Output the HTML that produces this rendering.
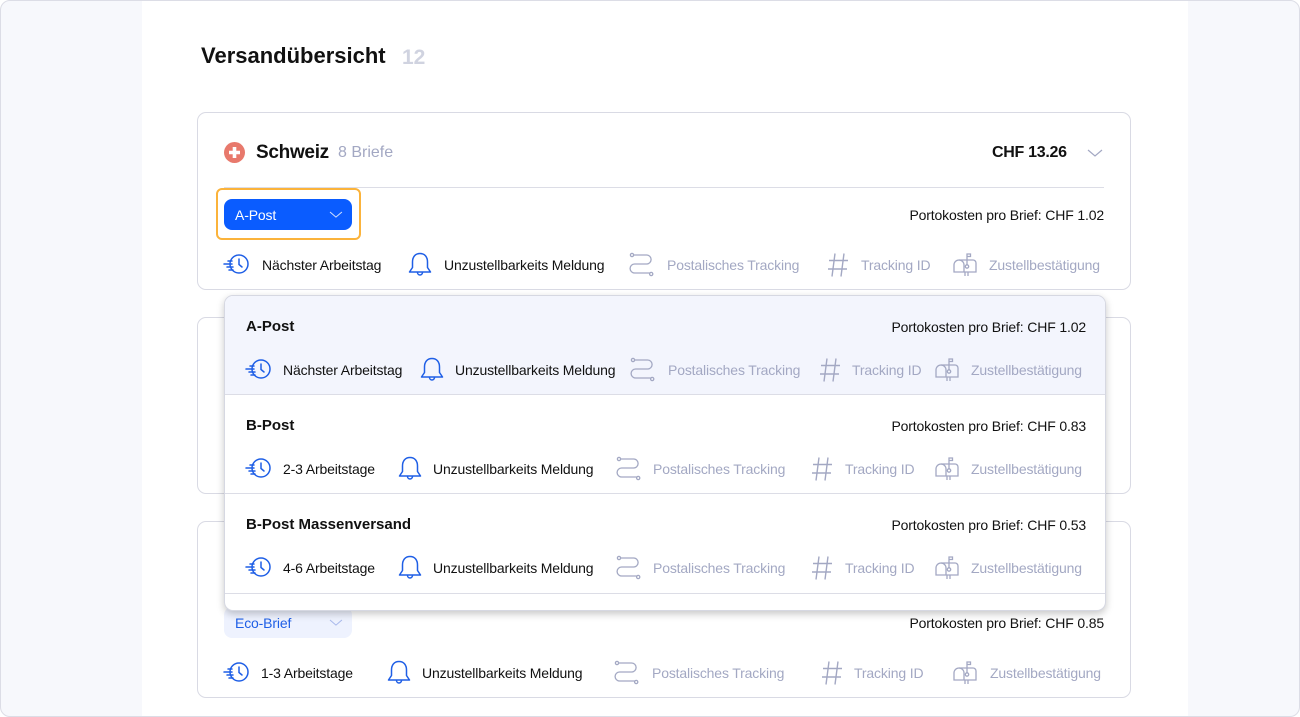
<!DOCTYPE html>
<html><head><meta charset="utf-8">
<style>
*{box-sizing:border-box;margin:0;padding:0}
body{width:1300px;height:717px;overflow:hidden;background:#fff;font-family:"Liberation Sans",sans-serif;position:relative;color:#111}
.page{position:absolute;left:0;top:0;width:1300px;height:717px;border:1px solid #dcdde6;border-radius:10px;background:#f7f8fc;overflow:hidden}
.col{position:absolute;left:141px;top:0;width:1046px;height:717px;background:#fff}
.a{position:absolute;white-space:nowrap}
.card{position:absolute;left:197px;width:934px;border:1px solid #d9dae4;border-radius:9px;background:#fff}
.t{font-size:14px;line-height:16px;letter-spacing:-0.15px}
.g{color:#a3a8c3}
.ic{position:absolute;width:26px;height:26px}
.b{stroke:#1f5fe6}.gr{stroke:#a3a8c3}
svg{overflow:visible}
.dd{position:absolute;left:224px;top:295px;width:882px;height:316px;background:#fff;border:1px solid #d6d8e2;border-radius:9px;box-shadow:0 3px 8px rgba(0,0,0,.22);overflow:hidden}
.row{position:absolute;left:0;width:882px;height:100px;border-bottom:1px solid #dcdde6}
.h{font-weight:bold;font-size:15px}
</style></head><body>
<svg width="0" height="0" style="position:absolute">
<defs>
<g id="clk" fill="none" stroke-width="1.5" stroke-linecap="round"><circle cx="15" cy="12" r="9"/><path d="M15 7v5.5l3 2.5"/><path d="M0 12h8M3 15h6M5 18h4M4 9h4"/></g>
<g id="bel" fill="none" stroke-width="1.5" stroke-linejoin="round"><path d="M13 1.5c-4.8 0-7.5 3.5-7.5 8.5v5.5l-3 4.5h21l-3-4.5v-5.5c0-5-2.7-8.5-7.5-8.5z"/><path d="M10.5 20.5a2.5 2.5 0 0 0 5 0"/></g>
<g id="trk" fill="none" stroke-width="1.3"><circle cx="3" cy="2" r="1.6"/><path d="M4.6 2h13a4.5 4.5 0 0 1 0 9h-12a4.5 4.5 0 0 0 0 9h15"/><circle cx="22.2" cy="21" r="1.6"/></g>
<g id="hsh" fill="none" stroke-width="1.4"><path d="M10 1.5L7 24.5M19 1.5L16 24.5M4 8.5h19M3 17h19"/></g>
<g id="mbx" fill="none" stroke-width="1.3"><path d="M7 8a5 5 0 0 0-5 5v7h22v-9a3 3 0 0 0-3-3z"/><path d="M7 8a5 5 0 0 1 5 5v7"/><path d="M15 13V2h3.5v2.5H15"/><circle cx="15" cy="14.5" r="1.7"/><path d="M13 20v4M16 20v4"/></g>
<g id="chv" fill="none" stroke-width="1.2"><path d="M0 0l7 6 7-6"/></g>
</defs></svg>
<div class="page"><div class="col"></div></div>

<div class="a" style="left:201px;top:43px;font-size:22px;font-weight:bold">Versandübersicht</div>
<div class="a" style="left:402px;top:46px;font-size:21px;font-weight:bold;color:#d0d3e0">12</div>

<!-- card 1 -->
<div class="card" style="top:112px;height:178px"></div>
<svg class="a" style="left:224px;top:142px" width="21" height="21"><circle cx="10.5" cy="10.5" r="10.5" fill="#e8796c"/><path d="M10.5 5v11M5 10.5h11" stroke="#fff" stroke-width="3.6"/></svg>
<div class="a" style="left:256px;top:142px;font-size:19px;font-weight:bold;letter-spacing:-0.3px">Schweiz</div>
<div class="a g" style="left:338px;top:144px;font-size:16px">8 Briefe</div>
<div class="a" style="left:992px;top:144px;font-size:16px;font-weight:bold;letter-spacing:-0.3px">CHF 13.26</div>
<svg class="a" style="left:1088px;top:150px" width="16" height="8"><use href="#chv" class="gr"/></svg>
<div class="a" style="left:224px;top:187px;width:880px;height:1px;background:#dcdde6"></div>
<div class="a" style="left:216px;top:188px;width:145px;height:52px;border:2px solid #fbb33b;border-radius:6px"></div>
<div class="a" style="left:224px;top:199px;width:128px;height:31px;background:#0a5cff;border-radius:8px"></div>
<div class="a t" style="left:235px;top:207px;color:#fff">A-Post</div>
<svg class="a" style="left:330px;top:212px" width="12" height="6"><g transform="scale(.85)"><use href="#chv" stroke="#cfe0ff"/></g></svg>
<div class="a t" style="right:196px;top:207px">Portokosten pro Brief: CHF 1.02</div>

<svg class="ic" style="left:224px;top:252px"><use href="#clk" class="b"/></svg><div class="a t" style="left:262px;top:257px">Nächster Arbeitstag</div>
<svg class="ic" style="left:407px;top:252px"><use href="#bel" class="b"/></svg><div class="a t" style="left:444px;top:257px">Unzustellbarkeits Meldung</div>
<svg class="ic" style="left:629px;top:253px"><use href="#trk" class="gr"/></svg><div class="a t g" style="left:667px;top:257px">Postalisches Tracking</div>
<svg class="ic" style="left:825px;top:252px"><use href="#hsh" class="gr"/></svg><div class="a t g" style="left:861px;top:257px">Tracking ID</div>
<svg class="ic" style="left:952px;top:252px"><use href="#mbx" class="gr"/></svg><div class="a t g" style="left:989px;top:257px">Zustellbestätigung</div>

<!-- card 2 & 3 -->
<div class="card" style="top:317px;height:177px"></div>
<div class="card" style="top:521px;height:177px"></div>
<div class="a" style="left:224px;top:607px;width:128px;height:31px;background:#eef2fe;border-radius:8px"></div>
<div class="a t" style="left:235px;top:615px;color:#1f5fe6">Eco-Brief</div>
<svg class="a" style="left:330px;top:620px" width="12" height="6"><g transform="scale(.85)"><use href="#chv" stroke="#a9b9ec"/></g></svg>
<div class="a t" style="right:196px;top:615px">Portokosten pro Brief: CHF 0.85</div>
<svg class="ic" style="left:224px;top:660px"><use href="#clk" class="b"/></svg><div class="a t" style="left:261px;top:665px">1-3 Arbeitstage</div>
<svg class="ic" style="left:386px;top:660px"><use href="#bel" class="b"/></svg><div class="a t" style="left:422px;top:665px">Unzustellbarkeits Meldung</div>
<svg class="ic" style="left:614px;top:661px"><use href="#trk" class="gr"/></svg><div class="a t g" style="left:652px;top:665px">Postalisches Tracking</div>
<svg class="ic" style="left:819px;top:660px"><use href="#hsh" class="gr"/></svg><div class="a t g" style="left:854px;top:665px">Tracking ID</div>
<svg class="ic" style="left:952px;top:660px"><use href="#mbx" class="gr"/></svg><div class="a t g" style="left:990px;top:665px">Zustellbestätigung</div>

<!-- dropdown -->
<div class="dd">
 <div class="row" style="top:0;height:99px;background:#f3f5fd">
  <div class="a h" style="left:21px;top:22px">A-Post</div>
  <div class="a t" style="right:21px;top:23px">Portokosten pro Brief: CHF 1.02</div>
  <svg class="ic" style="left:21px;top:61px"><use href="#clk" class="b"/></svg><div class="a t" style="left:58px;top:66px">Nächster Arbeitstag</div>
  <svg class="ic" style="left:194px;top:61px"><use href="#bel" class="b"/></svg><div class="a t" style="left:230px;top:66px">Unzustellbarkeits Meldung</div>
  <svg class="ic" style="left:405px;top:62px"><use href="#trk" class="gr"/></svg><div class="a t g" style="left:443px;top:66px">Postalisches Tracking</div>
  <svg class="ic" style="left:592px;top:61px"><use href="#hsh" class="gr"/></svg><div class="a t g" style="left:627px;top:66px">Tracking ID</div>
  <svg class="ic" style="left:709px;top:61px"><use href="#mbx" class="gr"/></svg><div class="a t g" style="left:746px;top:66px">Zustellbestätigung</div>
 </div>
 <div class="row" style="top:99px;height:99px">
  <div class="a h" style="left:21px;top:22px">B-Post</div>
  <div class="a t" style="right:21px;top:23px">Portokosten pro Brief: CHF 0.83</div>
  <svg class="ic" style="left:21px;top:61px"><use href="#clk" class="b"/></svg><div class="a t" style="left:58px;top:66px">2-3 Arbeitstage</div>
  <svg class="ic" style="left:172px;top:61px"><use href="#bel" class="b"/></svg><div class="a t" style="left:208px;top:66px">Unzustellbarkeits Meldung</div>
  <svg class="ic" style="left:391px;top:62px"><use href="#trk" class="gr"/></svg><div class="a t g" style="left:428px;top:66px">Postalisches Tracking</div>
  <svg class="ic" style="left:584px;top:61px"><use href="#hsh" class="gr"/></svg><div class="a t g" style="left:620px;top:66px">Tracking ID</div>
  <svg class="ic" style="left:709px;top:61px"><use href="#mbx" class="gr"/></svg><div class="a t g" style="left:746px;top:66px">Zustellbestätigung</div>
 </div>
 <div class="row" style="top:198px;height:100px">
  <div class="a h" style="left:21px;top:22px">B-Post Massenversand</div>
  <div class="a t" style="right:21px;top:23px">Portokosten pro Brief: CHF 0.53</div>
  <svg class="ic" style="left:21px;top:61px"><use href="#clk" class="b"/></svg><div class="a t" style="left:58px;top:66px">4-6 Arbeitstage</div>
  <svg class="ic" style="left:172px;top:61px"><use href="#bel" class="b"/></svg><div class="a t" style="left:208px;top:66px">Unzustellbarkeits Meldung</div>
  <svg class="ic" style="left:391px;top:62px"><use href="#trk" class="gr"/></svg><div class="a t g" style="left:428px;top:66px">Postalisches Tracking</div>
  <svg class="ic" style="left:584px;top:61px"><use href="#hsh" class="gr"/></svg><div class="a t g" style="left:620px;top:66px">Tracking ID</div>
  <svg class="ic" style="left:709px;top:61px"><use href="#mbx" class="gr"/></svg><div class="a t g" style="left:746px;top:66px">Zustellbestätigung</div>
 </div>
</div>
</body></html>
